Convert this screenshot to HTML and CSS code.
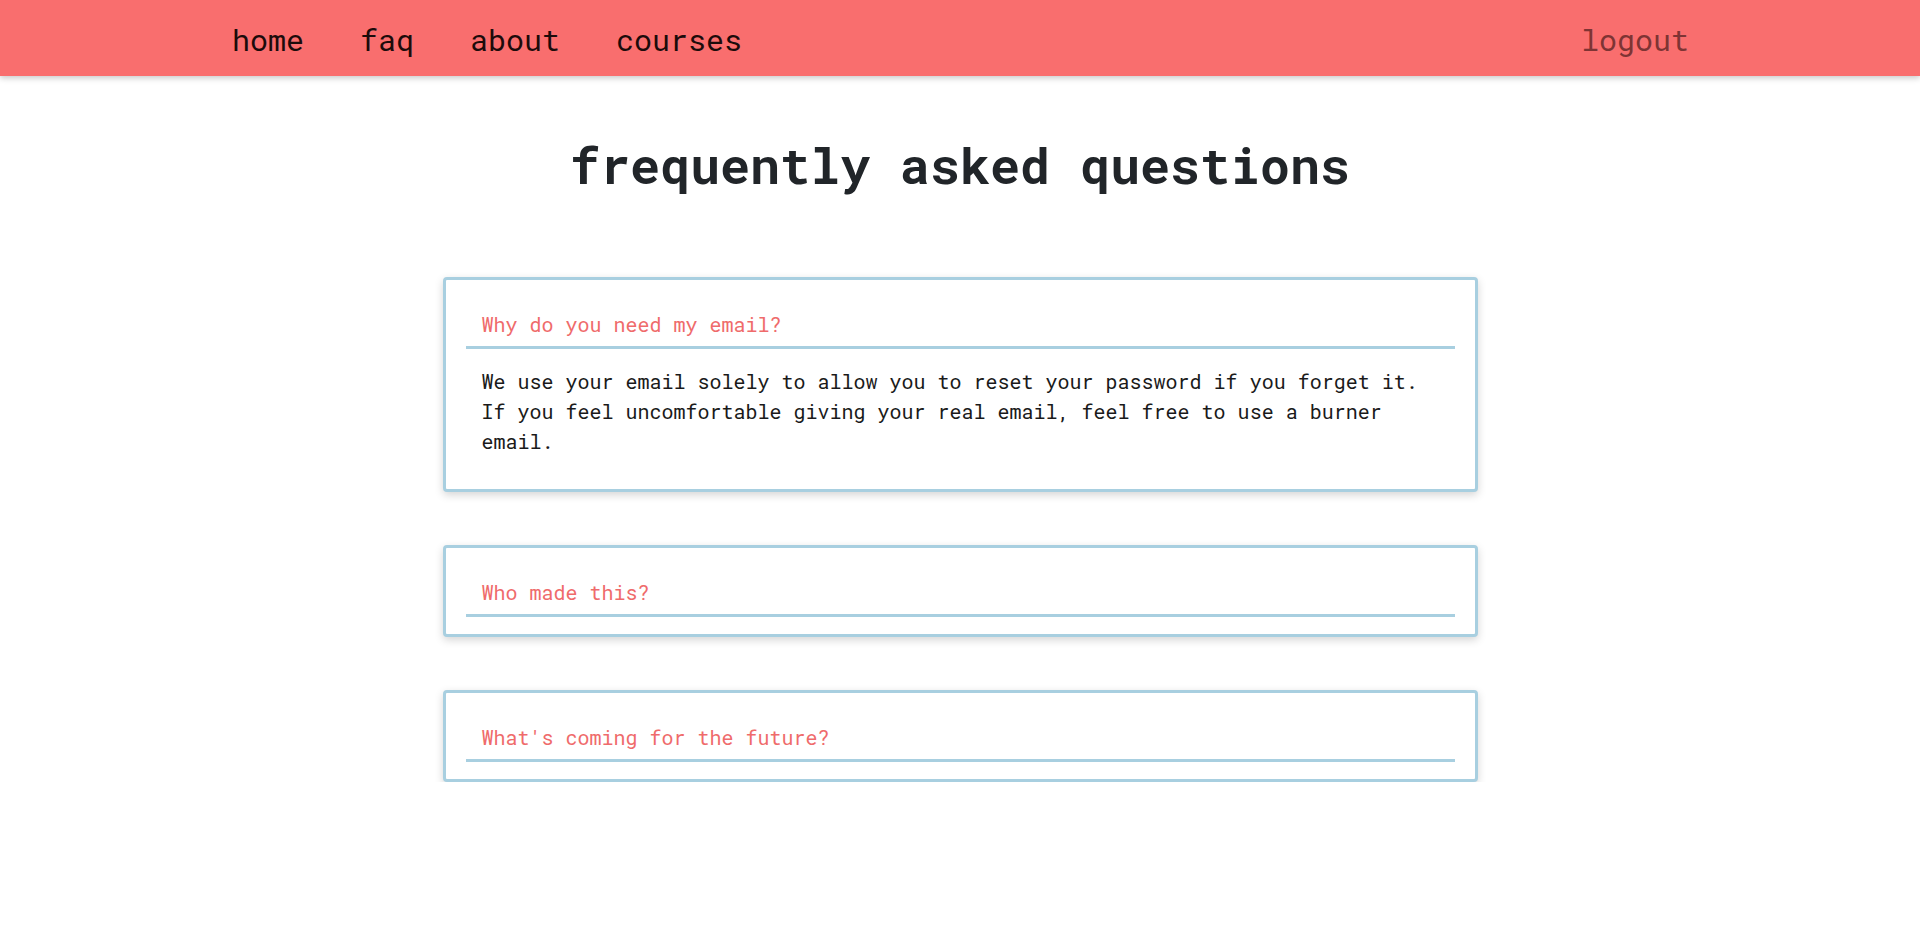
FILE: index.html
```html
<!DOCTYPE html>
<html lang="en">
<head>
<meta charset="utf-8">
<title>faq</title>
<link rel="stylesheet" href="styles.css">
</head>
<body>
<nav class="navbar">
  <ul class="nav-links">
    <li><a href="#">home</a></li>
    <li><a href="#">faq</a></li>
    <li><a href="#">about</a></li>
    <li><a href="#">courses</a></li>
  </ul>
  <a class="logout" href="#">logout</a>
</nav>
<main class="page">
  <h1 class="title">frequently asked questions</h1>
  <section class="faq-list">
    <div class="faq-card">
      <div class="question">Why do you need my email?</div>
      <div class="answer">We use your email solely to allow you to reset your password if you forget it. If you feel uncomfortable giving your real email, feel free to use a burner email.</div>
    </div>
    <div class="faq-card">
      <div class="question">Who made this?</div>
    </div>
    <div class="faq-card">
      <div class="question">What's coming for the future?</div>
    </div>
  </section>
</main>
</body>
</html>
```
FILE: styles.css
```css
* { box-sizing: border-box; }
html, body { margin: 0; padding: 0; background: #ffffff; }
body {
  font-family: "Roboto Mono", "DejaVu Sans Mono", "Liberation Mono", monospace;
  color: #212529;
}
.navbar {
  height: 76px;
  background: #f96e6e;
  box-shadow: 0 2px 6px rgba(0, 0, 0, 0.22);
  display: flex;
  align-items: center;
  padding: 2px 231px 0 232px;
  font-size: 30px;
  position: relative;
  z-index: 1;
}
.nav-links {
  list-style: none;
  margin: 0;
  padding: 0;
  display: flex;
  gap: 56px;
}
.nav-links a {
  color: #1c0b0b;
  text-decoration: none;
}
.logout {
  margin-left: auto;
  color: #7e3434;
  text-decoration: none;
}
.page {
  padding-top: 56px;
}
.title {
  margin: 0;
  text-align: center;
  font-size: 50px;
  font-weight: 700;
  line-height: 66px;
  color: #212529;
}
.faq-list {
  margin: 79px auto 0;
  width: 1035px;
  display: flex;
  flex-direction: column;
  gap: 53px;
}
.faq-card {
  border: 3px solid #a8cfe0;
  border-radius: 4px;
  padding: 20px 20px 17px;
  box-shadow: 0 3px 8px rgba(0, 0, 0, 0.17);
  background: #fff;
}
.question {
  font-size: 20px;
  line-height: 30px;
  color: #ef6b6b;
  padding: 9px 16px 7px;
  border-bottom: 3px solid #a8cfe0;
}
.answer {
  font-size: 20px;
  line-height: 30px;
  color: #1a1a1a;
  padding: 17px 16px 16px;
}
```
